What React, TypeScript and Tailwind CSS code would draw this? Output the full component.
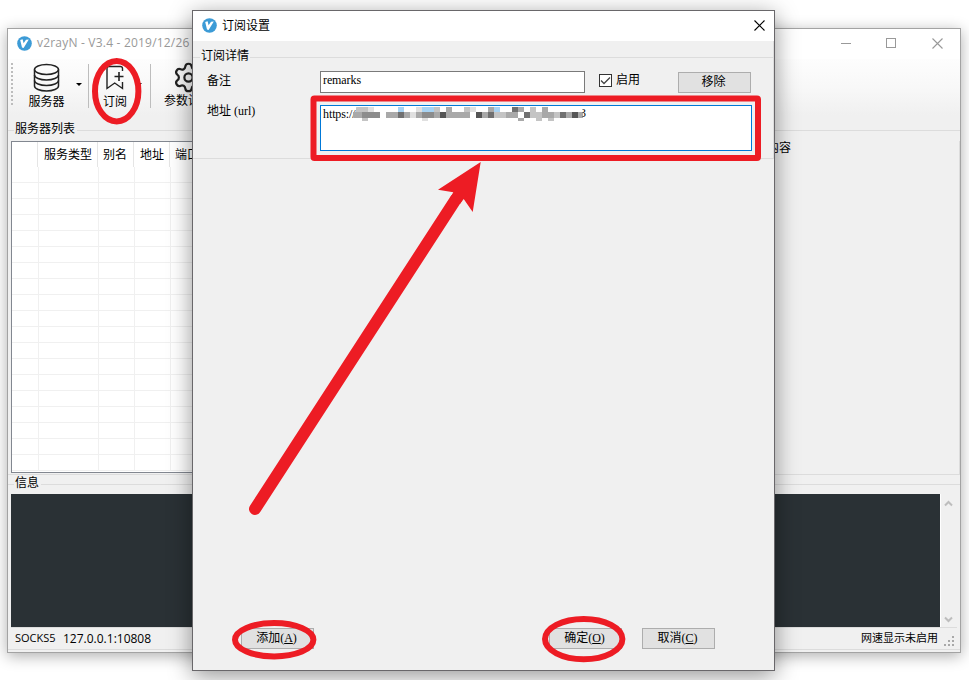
import React from "react";
import { Settings } from "lucide-react";

const sans = "font-['Open_Sans','Noto_Sans_CJK_SC',sans-serif]";
const serif = "font-['Liberation_Serif','Noto_Sans_CJK_SC',serif]";

function Logo() {
  return (
    <svg width="15" height="15" viewBox="0 0 15 15" className="shrink-0">
      <circle cx="7.5" cy="7.5" r="7.3" fill="#3c9bd6" />
      <path d="M3.200 4 L5.600 3.200 L6.600 7.300 L9 3.700 L11.800 3.500 L6.600 12 L5 11.600 Z" fill="#fff" />
    </svg>
  );
}

function DatabaseIcon() {
  return (
    <svg width="28" height="30" viewBox="0 0 28 30" fill="none" stroke="#222" strokeWidth="1.5">
      <ellipse cx="13.500" cy="6.500" rx="12" ry="5" />
      <path d="M1.500 6.500V23c0 2.800 5.400 5 12 5s12-2.200 12-5V6.500" />
      <path d="M1.500 12c0 2.800 5.400 5 12 5s12-2.200 12-5M1.500 17.500c0 2.800 5.400 5 12 5s12-2.200 12-5" />
    </svg>
  );
}

function BookmarkIcon() {
  return (
    <svg width="20" height="26" viewBox="0 0 20 26" fill="none" stroke="#222" strokeWidth="1.4">
      <path d="M17.500 6V3.500a2 2 0 0 0-2-2H4a2 2 0 0 0-2 2V23.500L9.700 18l7.800 5.500V17" />
      <path d="M14 7v9M9.500 11.500h9" strokeWidth="1.6" />
    </svg>
  );
}

function Caret() {
  return <span className="h-0 w-0 border-x-[3px] border-t-[3px] border-x-transparent border-t-black" />;
}

function CloseIcon({ color }: { color: string }) {
  return (
    <svg width="11" height="11" viewBox="0 0 11 11" stroke={color} strokeWidth="1.1">
      <path d="M.5.5l10 10M10.500.5l-10 10" />
    </svg>
  );
}

function ServerTable() {
  return (
    <div className="ml-[3px] flex h-[332px] w-[400px] flex-col border border-[#828790] bg-white">
      <div className="flex h-[25px] shrink-0 text-[12px] leading-[25px]">
        <div className="w-[26px] border-r border-[#e5e5e5]" />
        <div className="w-[60px] border-r border-[#e5e5e5] pl-[6px]">服务类型</div>
        <div className="w-[36px] border-r border-[#e5e5e5] pl-[5px]">别名</div>
        <div className="w-[36px] border-r border-[#e5e5e5] pl-[6px]">地址</div>
        <div className="pl-[5px]">端口</div>
      </div>
      {Array.from({ length: 19 }, (_, i) => (
        <div key={i} className="flex h-[16px] shrink-0 border-b border-[#f0f0f0]">
          <div className="w-[27px] border-r border-[#f0f0f0]" />
          <div className="w-[60px] border-r border-[#f0f0f0]" />
          <div className="w-[36px] border-r border-[#f0f0f0]" />
          <div className="w-[36px] border-r border-[#f0f0f0]" />
        </div>
      ))}
    </div>
  );
}

function MainWindow() {
  return (
    <div className={`absolute left-[7px] top-[28px] flex h-[625px] w-[954px] flex-col border border-[#a3a3a3] bg-[#f0f0f0] text-black shadow-[0_3px_14px_rgba(0,0,0,0.32)] ${sans}`}>
      <div className="flex h-[30px] shrink-0 items-center bg-white pb-[2px] pl-[9px] pr-[17px]">
        <Logo />
        <span className="ml-[5px] flex-1 whitespace-nowrap text-[12px] tracking-[0.2px] text-[#999]">v2rayN - V3.4 - 2019/12/26</span>
        <span className="h-px w-[10px] bg-[#999]" />
        <span className="ml-[35px] h-[10px] w-[10px] border border-[#999]" />
        <span className="ml-[36px]"><CloseIcon color="#999" /></span>
      </div>
      <div className="flex h-[56px] shrink-0 bg-gradient-to-b from-[#fdfdfd] via-[#f8f8f8] to-[#f0f0f0]">
        <div className="ml-[3px] mt-[4px] h-[42px] w-[2px] bg-[repeating-linear-gradient(to_bottom,#bdbdbd_0_2px,transparent_2px_4px)]" />
        <div className="ml-[13px] flex w-[41px] flex-col items-center pt-[4px] text-[12px] leading-[14px]">
          <DatabaseIcon />
          <span className="mt-[2px]">服务器</span>
        </div>
        <div className="ml-[9px] mt-[26px]"><Caret /></div>
        <div className="ml-[6px] mt-[5px] h-[44px] w-px bg-[#bdbdbd]" />
        <div className="ml-[10px] flex w-[32px] flex-col items-center pt-[6px] text-[12px] leading-[14px]">
          <BookmarkIcon />
          <span className="mt-[4px]">订阅</span>
        </div>
        <div className="ml-[5px] mt-[26px]"><Caret /></div>
        <div className="ml-[8px] mt-[5px] h-[44px] w-px bg-[#bdbdbd]" />
        <div className="ml-[9px] flex w-[56px] flex-col items-center pt-[3px] text-[12px] leading-[14px]">
          <Settings size={33} strokeWidth={1.6} color="#222" className="-mt-px" />
          <span>参数设置</span>
        </div>
      </div>
      <div className="flex h-[27px] shrink-0 items-center text-[12px]">
        <span className="mt-[4px] h-px w-[6px] bg-[#dcdcdc]" />
        <span className="px-[1px]">服务器列表</span>
        <span className="ml-px mt-[4px] h-px flex-1 bg-[#dcdcdc]" />
      </div>
      <div className="-mt-px flex h-[334px] shrink-0 border-b border-r border-[#dcdcdc]">
        <ServerTable />
        <span className="ml-[356px] text-[12px] leading-[14px]">内容</span>
      </div>
      <div className="flex h-[18px] shrink-0 items-center text-[12px] leading-[14px]">
        <span className="h-px w-[6px] bg-[#dcdcdc]" />
        <span className="-mt-[3px] px-[1px]">信息</span>
        <span className="ml-px h-px flex-1 bg-[#dcdcdc]" />
      </div>
      <div className="ml-[3px] mr-[3px] mt-px flex h-[134px] shrink-0 border-b border-[#dcdcdc]">
        <div className="w-[929px] bg-[#2a3135]" />
        <div className="flex flex-1 flex-col items-center justify-between border-l border-white pb-[4px] pr-[2px] pt-[6px]">
          <svg width="9" height="7" viewBox="0 0 9 7" fill="none" stroke="#bdbdbd" strokeWidth="2"><path d="M1 5.500l3.500-3.500L8 5.500" /></svg>
          <svg width="9" height="7" viewBox="0 0 9 7" fill="none" stroke="#bdbdbd" strokeWidth="2"><path d="M1 1.500L4.500 5 8 1.500" /></svg>
        </div>
      </div>
      <div className="flex h-[22px] shrink-0 items-center border-b border-[#dcdcdc] pl-[7px] text-[12px]">
        <span className="w-[48px] text-[11px]">SOCKS5</span>
        <span className="flex-1">127.0.0.1:10808</span>
        <span className="text-[11px]">网速显示未启用</span>
        <svg width="11" height="11" viewBox="0 0 11 11" fill="#a8a8a8" className="ml-[6px] mr-[5px] mt-[6px]">
          <path d="M8 0h2v2H8zM4 4h2v2H4zM8 4h2v2H8zM0 8h2v2H0zM4 8h2v2H4zM8 8h2v2H8z" />
        </svg>
      </div>
    </div>
  );
}

const G = { e: "#e0e0e0", c: "#c4c4c4", a: "#a9a9a9", m: "#8c8c8c", d: "#707070", k: "#555555", b: "#a8d3f3", w: "#ffffff" };

// Censoring blocks: x, row, width, shade.
const blocks: [number, number, number, keyof typeof G][] = [
  [356, 0, 12, "c"], [368, 0, 6, "e"], [398, 0, 6, "b"], [416, 0, 6, "e"], [422, 0, 12, "b"], [434, 0, 6, "c"],
  [446, 0, 6, "a"], [464, 0, 6, "c"], [470, 0, 6, "e"], [488, 0, 6, "a"], [494, 0, 6, "b"], [512, 0, 6, "d"],
  [518, 0, 6, "a"], [530, 0, 6, "c"], [542, 0, 6, "a"],
  [353, 1, 9, "a"], [362, 1, 18, "m"], [386, 1, 12, "a"], [398, 1, 6, "d"], [404, 1, 6, "a"], [410, 1, 6, "e"],
  [416, 1, 6, "a"], [422, 1, 12, "m"], [434, 1, 6, "a"], [440, 1, 6, "k"], [446, 1, 24, "a"], [476, 1, 6, "k"],
  [482, 1, 6, "a"], [488, 1, 6, "d"], [494, 1, 12, "c"], [506, 1, 12, "a"], [524, 1, 6, "d"], [530, 1, 12, "c"],
  [542, 1, 12, "a"], [554, 1, 6, "c"], [560, 1, 6, "d"], [566, 1, 6, "a"], [572, 1, 6, "k"], [578, 1, 5, "a"],
  [362, 2, 6, "c"], [422, 2, 6, "e"], [518, 2, 6, "a"], [536, 2, 6, "c"], [548, 2, 6, "c"],
];

function Mosaic() {
  const ys = [0, 5, 11];
  const hs = [5, 6, 3];
  return (
    <svg width="230" height="14" viewBox="353 0 230 14" className="mt-[1px] shrink-0" shapeRendering="crispEdges">
      <defs>
        <clipPath id="censored"><rect x="353" y="0" width="236" height="14" rx="5" /></clipPath>
      </defs>
      <g clipPath="url(#censored)">
        {blocks.map(([x, r, w, c], i) => <rect key={i} x={x} y={ys[r]} width={w} height={hs[r]} fill={G[c]} />)}
      </g>
    </svg>
  );
}

function Button({ children, className = "" }: { children: React.ReactNode; className?: string }) {
  return (
    <button className={`flex h-[21px] w-[73px] shrink-0 items-center justify-center border border-[#adadad] bg-[#e1e1e1] text-[12px] leading-[14px] ${className}`}>
      <span className="-mt-px mr-[2px]">{children}</span>
    </button>
  );
}

function Dialog() {
  return (
    <div className={`absolute left-[192px] top-[10px] flex h-[661px] w-[583px] flex-col border border-[#69676a] bg-[#f0f0f0] text-[12px] text-black shadow-[0_5px_22px_rgba(0,0,0,0.42)] ${serif}`}>
      <div className="flex h-[30px] shrink-0 items-center bg-white pb-[2px] pl-[9px] pr-[9px]">
        <Logo />
        <span className="ml-[5px] flex-1 pt-px">订阅设置</span>
        <CloseIcon color="#000" />
      </div>
      <div className="flex h-[118px] shrink-0 flex-col border-b border-r border-[#dcdcdc]">
        <div className="flex h-[30px] shrink-0 items-start">
          <span className="mt-[16px] h-px w-[7px] bg-[#dcdcdc]" />
          <span className="mt-[7px] px-px leading-[16px]">订阅详情</span>
          <span className="mt-[16px] h-px flex-1 bg-[#dcdcdc]" />
        </div>
        <div className="flex h-[34px] shrink-0 items-start pl-[14px]">
          <span className="mt-[2px] w-[113px] leading-[16px]">备注</span>
          <div className="h-[22px] w-[265px] border border-[#7a7a7a] bg-white pl-[2px] leading-[17px] tracking-[-0.1px]">remarks</div>
          <div className="ml-[14px] mt-[3px] flex h-[13px] w-[13px] items-center justify-center border border-[#333] bg-white">
            <svg width="11" height="11" viewBox="0 0 11 11" fill="none" stroke="#444" strokeWidth="1.3"><path d="M1 5.500l3 3 6-6" /></svg>
          </div>
          <span className="ml-[4px] mt-px w-[62px] leading-[16px]">启用</span>
          <Button className="mt-px">移除</Button>
        </div>
        <div className="flex items-start pl-[14px]">
          <span className="-mt-[2px] w-[113px] leading-[16px]">地址 (url)</span>
          <div className="flex h-[46px] w-[432px] items-start border border-[#0078d7] bg-white pl-[2px] leading-[17px]">
            <span className="w-[30px] whitespace-nowrap tracking-[-0.1px]">https://</span>
            <Mosaic />
            <span className="-ml-[3px] -mt-px w-[6px] [clip-path:inset(0_0_0_40%)]">3</span>
          </div>
        </div>
      </div>
      <div className="flex-1" />
      <div className="mb-[21px] flex pl-[48px]">
        <Button>添加(<u>A</u>)</Button>
        <Button className="ml-[235px]">确定(<u>O</u>)</Button>
        <Button className="ml-[20px]">取消(<u>C</u>)</Button>
      </div>
    </div>
  );
}

function Annotations() {
  return (
    <svg width="969" height="680" viewBox="0 0 969 680" className="pointer-events-none absolute left-0 top-0" fill="none" stroke="#ed1c24" strokeWidth="6">
      <ellipse cx="116.700" cy="91.200" rx="21.700" ry="30.200" />
      <ellipse cx="274.200" cy="639.700" rx="39.200" ry="16.700" />
      <ellipse cx="583.700" cy="639.100" rx="38.700" ry="20.200" />
      <rect x="313.500" y="98.500" width="444.500" height="59.500" rx="1" />
      <path d="M255 509L456 199" strokeWidth="12" strokeLinecap="round" />
      <path d="M480.700 162L438 189.700L453.300 192.300L450 198L460 204L463.700 199L472.700 212Z" fill="#ed1c24" stroke="none" />
    </svg>
  );
}

export default function App() {
  return (
    <div className="relative h-[680px] w-[969px] overflow-hidden bg-white">
      <MainWindow />
      <Dialog />
      <Annotations />
    </div>
  );
}
